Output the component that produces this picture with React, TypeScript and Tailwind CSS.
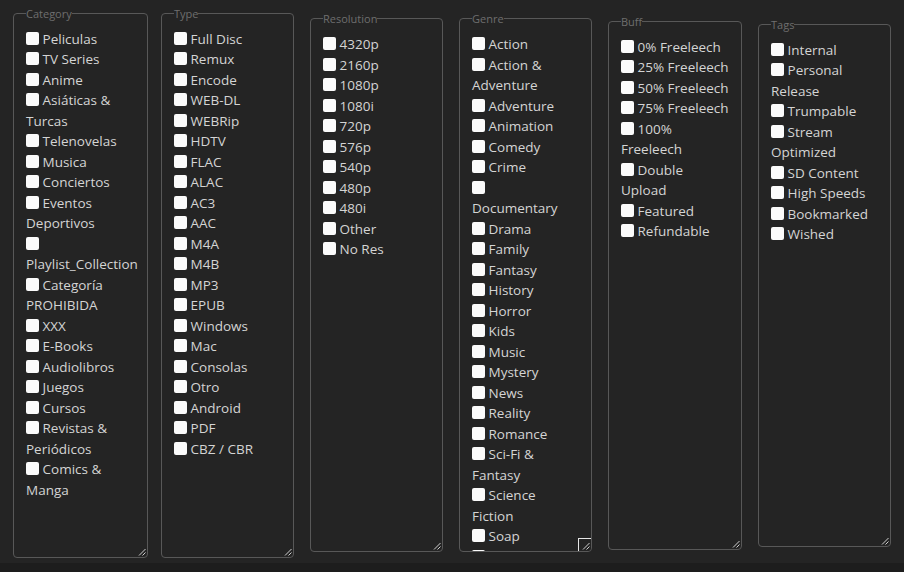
import React from "react";

type Group = {
  legend: string;
  items: string[];
  box: string;
  clipped?: boolean;
};

const groups: Group[] = [
  {
    legend: "Category",
    box: "ml-[13px] w-[135px] h-[552px] pr-3",
    items: [
      "Peliculas",
      "TV Series",
      "Anime",
      "Asiáticas & Turcas",
      "Telenovelas",
      "Musica",
      "Conciertos",
      "Eventos Deportivos",
      "Playlist_Collection",
      "Categoría PROHIBIDA",
      "XXX",
      "E-Books",
      "Audiolibros",
      "Juegos",
      "Cursos",
      "Revistas & Periódicos",
      "Comics & Manga",
    ],
  },
  {
    legend: "Type",
    box: "ml-[13px] w-[133px] h-[552px] pr-3",
    items: [
      "Full Disc",
      "Remux",
      "Encode",
      "WEB-DL",
      "WEBRip",
      "HDTV",
      "FLAC",
      "ALAC",
      "AC3",
      "AAC",
      "M4A",
      "M4B",
      "MP3",
      "EPUB",
      "Windows",
      "Mac",
      "Consolas",
      "Otro",
      "Android",
      "PDF",
      "CBZ / CBR",
    ],
  },
  {
    legend: "Resolution",
    box: "ml-[16px] w-[133px] h-[541px] pr-3",
    items: ["4320p", "2160p", "1080p", "1080i", "720p", "576p", "540p", "480p", "480i", "Other", "No Res"],
  },
  {
    legend: "Genre",
    box: "ml-[16px] w-[133px] h-[541px] pr-[21px]",
    clipped: true,
    items: [
      "Action",
      "Action & Adventure",
      "Adventure",
      "Animation",
      "Comedy",
      "Crime",
      "Documentary",
      "Drama",
      "Family",
      "Fantasy",
      "History",
      "Horror",
      "Kids",
      "Music",
      "Mystery",
      "News",
      "Reality",
      "Romance",
      "Sci-Fi & Fantasy",
      "Science Fiction",
      "Soap",
      "Talk",
      "Thriller",
      "War",
      "Western",
    ],
  },
  {
    legend: "Buff",
    box: "ml-[16px] w-[134px] h-[536px] pr-3",
    items: [
      "0% Freeleech",
      "25% Freeleech",
      "50% Freeleech",
      "75% Freeleech",
      "100% Freeleech",
      "Double Upload",
      "Featured",
      "Refundable",
    ],
  },
  {
    legend: "Tags",
    box: "ml-[16px] w-[133px] h-[530px] pr-3",
    items: [
      "Internal",
      "Personal Release",
      "Trumpable",
      "Stream Optimized",
      "SD Content",
      "High Speeds",
      "Bookmarked",
      "Wished",
    ],
  },
];

function ResizeGrip() {
  return (
    <svg
      className="absolute bottom-[1px] right-[1px]"
      width="8"
      height="8"
      viewBox="0 0 8 8"
      fill="none"
      stroke="#cfcfcf"
      strokeWidth="1"
    >
      <path d="M1 7.5 L7.5 1 M4.5 7.5 L7.5 4.5" />
    </svg>
  );
}

function FilterGroup({ group }: { group: Group }) {
  return (
    <fieldset
      className={`relative min-w-0 shrink-0 overflow-hidden rounded-[4px] border border-[#585858] pl-3 pt-[8px] ${group.box}`}
    >
      <legend className="text-[11px] leading-[15px] text-[#6e6e6e]">{group.legend}</legend>
      {group.items.map((item) => (
        <label key={item} className="block text-[13.5px] leading-[20.5px] text-[#d4d4d4]">
          <input
            type="checkbox"
            className="inline-block h-[13px] w-[13px] appearance-none rounded-[2px] bg-[#fbfbfb] align-[-1px]"
          />{" "}
          {item}
        </label>
      ))}
      {group.clipped ? (
        <span className="absolute bottom-0 right-0 h-[13px] w-[13px] border-l border-t border-[#e6e6e6] bg-[#242424]" />
      ) : null}
      <ResizeGrip />
    </fieldset>
  );
}

export default function App() {
  return (
    <div className="font-['Open_Sans',sans-serif]">
      <div className="flex h-[563px] items-center bg-[#242424]">
        {groups.map((g) => (
          <FilterGroup key={g.legend} group={g} />
        ))}
      </div>
      <div className="h-[9px] bg-[#1d1d1d]" />
    </div>
  );
}
